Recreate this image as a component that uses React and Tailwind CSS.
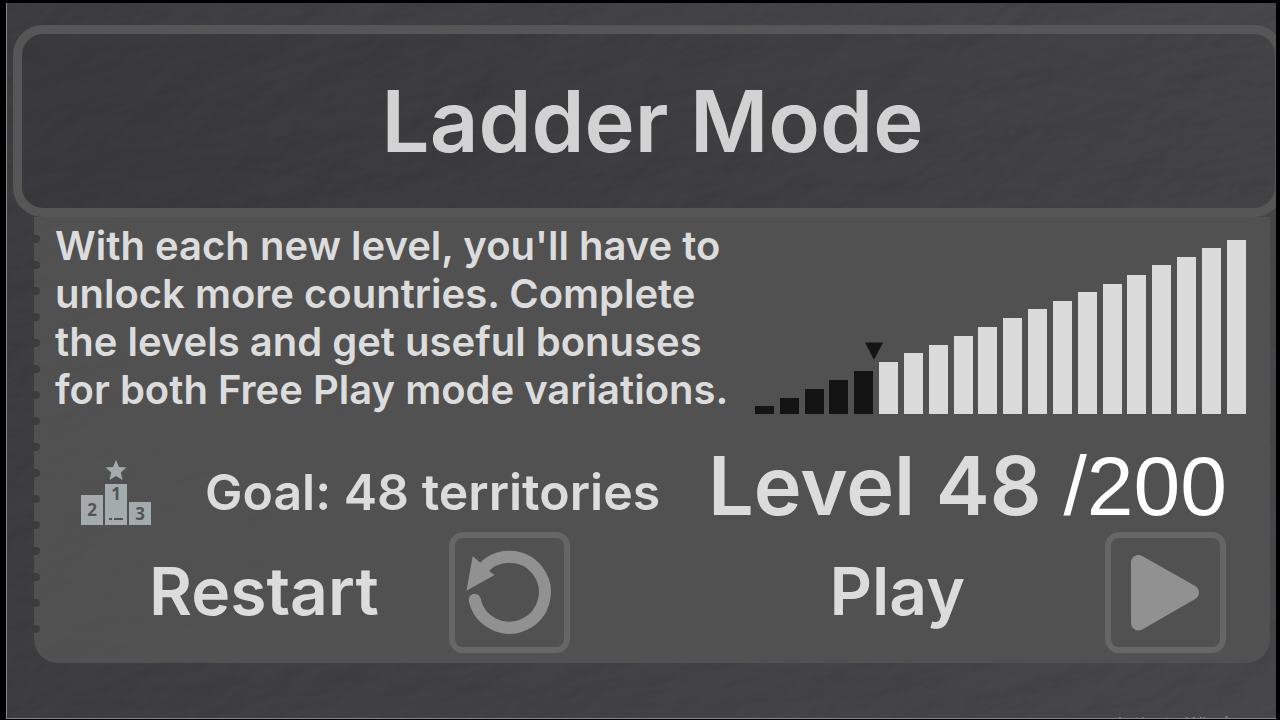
const levels = [
  8, 16, 25, 34, 43, 52, 61, 69, 78, 87, 96, 105, 113, 122, 130, 139, 149, 157,
  166, 174,
];

const passed = 5;

function StoneTexture() {
  return (
    <svg className="absolute inset-0 h-full w-full opacity-30" aria-hidden="true">
      <filter id="stone" x="0" y="0" width="100%" height="100%">
        <feTurbulence
          type="fractalNoise"
          baseFrequency="0.014 0.026"
          numOctaves="4"
          seed="8"
        />
        <feDiffuseLighting lightingColor="#4e4e51" surfaceScale="4">
          <feDistantLight azimuth="245" elevation="50" />
        </feDiffuseLighting>
      </filter>
      <g transform="rotate(-14 640 360)">
        <rect x="-200" y="-300" width="1700" height="1400" filter="url(#stone)" />
      </g>
    </svg>
  );
}

function LevelChart() {
  return (
    <div
      className="flex w-[491px] items-end justify-between"
      role="img"
      aria-label="Level progress"
    >
      {levels.map((height, index) => (
        <div
          key={index}
          className={`relative w-[19px] ${index < passed ? "bg-[#141414]" : "bg-[#dadada]"}`}
          style={{ height }}
        >
          {index === passed && (
            <svg
              className="absolute -top-[20px] -left-[14px]"
              width="18"
              height="18"
              viewBox="0 0 18 18"
            >
              <path d="M0 0.5H18L9 18Z" fill="#141414" />
            </svg>
          )}
        </div>
      ))}
    </div>
  );
}

function Podium() {
  return (
    <svg width="70" height="66" viewBox="0 0 70 66" className="shrink-0" aria-hidden="true">
      <path
        d="M35 1l3 7 7.500.6-5.800 4.900 1.900 7.500-6.600-4-6.600 4 1.900-7.500-5.800-4.900 7.500-.6z"
        fill="#a3abad"
      />
      <g fill="#a3abad">
        <rect x="0" y="36" width="22" height="30" />
        <rect x="24" y="25" width="22" height="41" />
        <rect x="48" y="43" width="22" height="23" />
      </g>
      <g
        fill="#515457"
        fontFamily="Open Sans, sans-serif"
        fontWeight="700"
        fontSize="17"
        textAnchor="middle"
      >
        <text x="11" y="57">2</text>
        <text x="35" y="41">1</text>
        <text x="59" y="61">3</text>
      </g>
      <path d="M28 59h3v2h-3zM33 59h9v2h-9z" fill="#515457" />
    </svg>
  );
}

function IconButton({ id, children }) {
  return (
    <button
      id={id}
      type="button"
      className="flex size-[121px] shrink-0 items-center justify-center rounded-[14px] border-[6px] border-[#666666]"
    >
      {children}
    </button>
  );
}

function RestartIcon() {
  return (
    <svg width="109" height="109" viewBox="0 0 109 109" aria-hidden="true">
      <path
        d="M26.500 32.200A35.500 35.500 0 1 1 19.700 61.700"
        fill="none"
        stroke="#919191"
        strokeWidth="12"
      />
      <circle cx="19.700" cy="61.700" r="6" fill="#919191" />
      <path d="M17.700 18L26 25.500 35 33.500 39.500 37 11.500 52.700Z" fill="#919191" />
    </svg>
  );
}

function PlayIcon() {
  return (
    <svg width="109" height="109" viewBox="0 0 109 109" aria-hidden="true">
      <path
        d="M27.500 31V85L80.500 54.500 27.500 24.500Z"
        fill="#919191"
        stroke="#919191"
        strokeWidth="15"
        strokeLinejoin="round"
      />
    </svg>
  );
}

function App() {
  return (
    <div className="flex min-h-screen flex-col bg-black pt-[3px] pr-1 pb-px pl-[6px] font-[Inter,sans-serif] font-semibold text-[#dcdcdc]">
      <main className="relative flex flex-1 flex-col overflow-hidden border-b border-l border-[#858585] bg-linear-to-r from-[#3a3a3d] to-[#48484b]">
        <StoneTexture />

        {/* Header */}
        <header className="relative mt-[22px] -mr-2 ml-[6px] rounded-[30px] border-[9px] border-[#565656] bg-black/5 pt-10 pb-[38px] pl-2 text-center">
          <h1 className="text-[85px] leading-[96px] text-[#d2d2d3]">Ladder Mode</h1>
        </header>

        {/* Level details */}
        <section className="relative mr-[6px] ml-[27px] rounded-b-3xl bg-[#525252]/92 pt-[5px] pr-6 pb-[10px] pl-[21px]">
          <div className="absolute top-[18px] -left-[2px] flex flex-col gap-[18px]">
            {Array.from({ length: 16 }, (_, i) => (
              <span key={i} className="size-2 rounded-full bg-[#3c3c3e]" />
            ))}
          </div>

          <div className="flex items-end justify-between">
            <p className="text-[40px] leading-[48px] whitespace-nowrap">
              With each new level, you'll have to
              <br />
              unlock more countries. Complete
              <br />
              the levels and get useful bonuses
              <br />
              for both Free Play mode variations.
            </p>
            <LevelChart />
          </div>

          <div className="mt-[38px] flex items-center justify-between pr-[19px] pl-[26px] whitespace-nowrap">
            <div className="flex items-center gap-[54px]">
              <Podium />
              <span className="text-[50px] leading-[80px]">Goal: 48 territories</span>
            </div>
            <div className="flex items-baseline gap-[22px] pb-3 leading-[64px]">
              <span className="text-[81px]">Level 48</span>
              <span className="font-['Liberation_Sans',sans-serif] text-[84px] font-normal text-white">
                /200
              </span>
            </div>
          </div>

          <div className="flex items-center justify-between pr-[20px] pl-[94px]">
            <div className="flex items-center gap-[70px]">
              <label htmlFor="restart" className="pb-1 text-[66px] leading-[72px]">
                Restart
              </label>
              <IconButton id="restart">
                <RestartIcon />
              </IconButton>
            </div>
            <div className="flex items-center gap-[140px]">
              <label htmlFor="play" className="pb-1 text-[66px] leading-[72px]">
                Play
              </label>
              <IconButton id="play">
                <PlayIcon />
              </IconButton>
            </div>
          </div>
        </section>

        <span className="absolute right-[14px] -bottom-[17px] font-['Open_Sans',sans-serif] text-[18px] leading-[24px] font-normal text-[#909090]">
          Activate Windows
        </span>
      </main>
    </div>
  );
}

export default App;
